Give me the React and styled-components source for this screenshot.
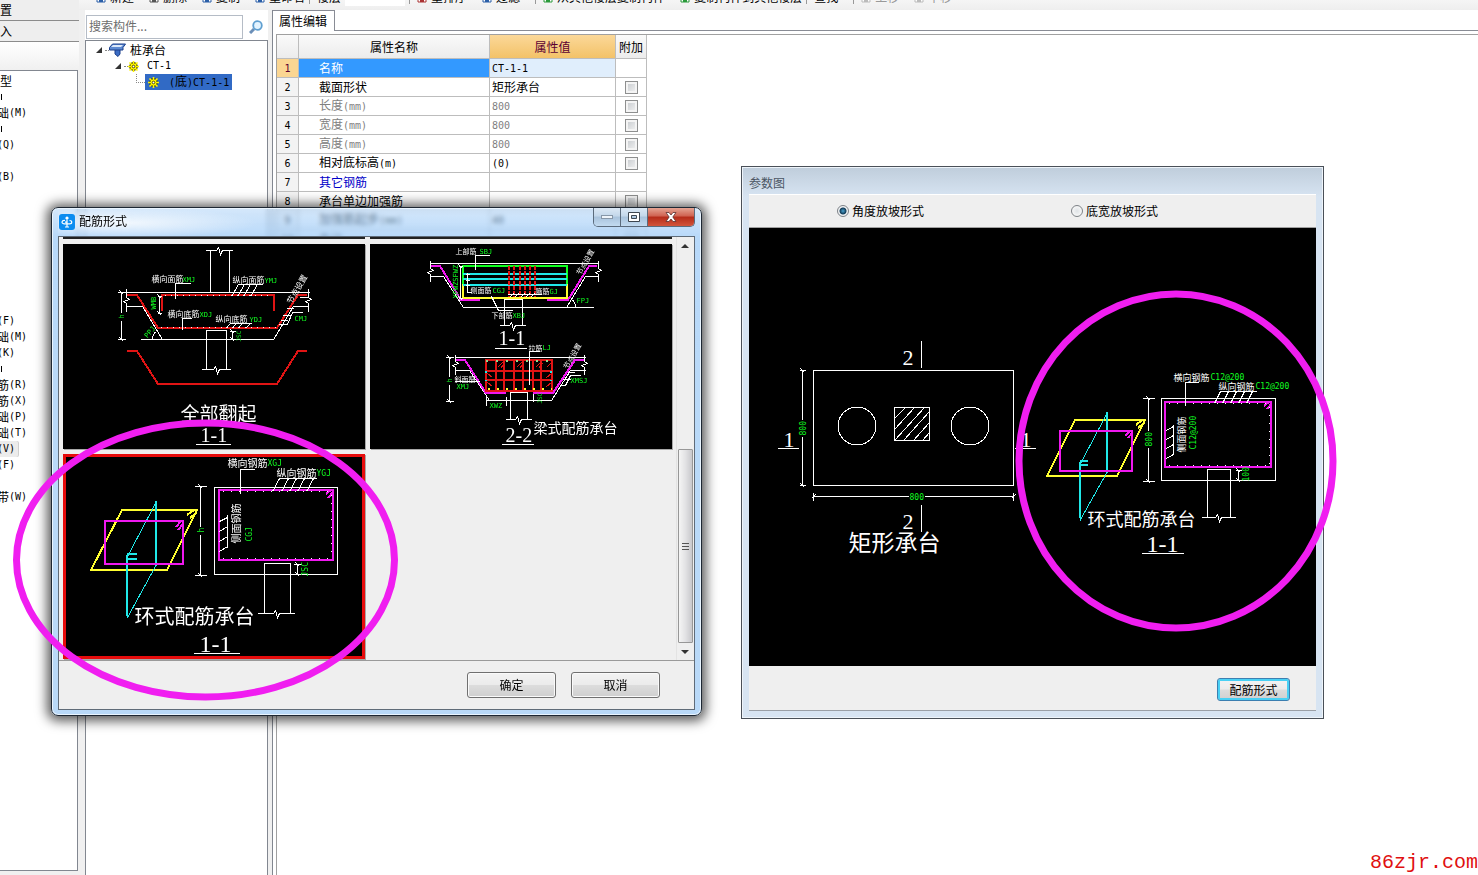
import React, { useState } from 'react';
import styled, { createGlobalStyle, css } from 'styled-components';

const sans = '"Noto Sans CJK SC", "Liberation Sans", sans-serif';
const mono = '"DejaVu Sans Mono", "Noto Sans CJK SC", monospace';

const GlobalStyle = createGlobalStyle`
  * { box-sizing: border-box; }
  body {
    margin: 0;
    background: #fff;
    color: #000;
    font-family: ${sans};
    font-size: 12px;
    line-height: 16px;
  }
  button, input { font: inherit; color: inherit; }
`;

/* ---------- main frame ---------- */

const Page = styled.div`
  position: relative;
  display: flex;
  min-height: 100vh;
  overflow: hidden;
`;

const Dock = styled.aside`
  display: flex;
  flex-direction: column;
  width: 79px;
  background: #f0f0f0;
`;

const DockTab = styled.button`
  height: 21px;
  padding: 0;
  border: 0;
  border-bottom: 1px solid #8c8c8c;
  background: #eee;
  text-align: left;
  line-height: 20px;
`;

const DockHead = styled.div`
  height: 28px;
  background: linear-gradient(#fff, #f0f0f0);
`;

const DockList = styled.ul`
  flex: 1;
  margin: 0 1px 4px 0;
  padding: 2px 0 0;
  border: 1px solid #828790;
  border-left: 0;
  background: #fff;
  list-style: none;
`;

const DockItem = styled.li`
  display: flex;
  align-items: center;
  width: ${(p) => (p.$on ? '21px' : 'auto')};
  height: 16px;
  margin-left: ${(p) => (p.$shortcut ? '-3px' : '0')};
  ${(p) => p.$on && css`
    border-radius: 2px;
    background: #ececec;
    box-shadow: 1px 0 0 #d0d0d0;
  `}
`;

const Sliver = styled.i`
  width: 2px;
  height: 6px;
  border-right: 1px solid #000;
`;

const Latin = styled.span`
  font-family: ${mono};
  font-size: 10px;
`;

const Work = styled.main`
  display: flex;
  flex: 1;
  flex-direction: column;
  min-width: 0;
`;

const Toolbar = styled.div`
  display: flex;
  align-items: flex-end;
  height: 10px;
  padding-left: 17px;
  overflow: hidden;
  background: linear-gradient(#f5f5f5, #eee);
  white-space: nowrap;
`;

const Tool = styled.button`
  display: flex;
  align-items: center;
  gap: 4px;
  height: 16px;
  margin: 0 ${(p) => (p.$last ? 4 : 15)}px 5px 0;
  padding: 0;
  border: 0;
  background: none;
  color: ${(p) => (p.$off ? '#999' : '#000')};

  svg { width: 10px; height: 12px; }
`;

const ToolGap = styled.span`
  width: 1px;
  height: 16px;
  margin: 0 7px 6px 0;
  background: #999;
`;

const ToolField = styled.span`
  width: 60px;
  height: 16px;
  margin: 0 4px 4px 0;
  background: #fff;
`;

const Panes = styled.div`
  display: flex;
  flex: 1;
  background: #f0f0f0;
`;

const TreePane = styled.section`
  display: flex;
  flex-direction: column;
  width: 183px;
  margin-left: 6px;
`;

const SearchRow = styled.div`
  display: flex;
  align-items: center;
  height: 30px;
  padding: 4px 5px 0 1px;
  background: #fff;

  svg { width: 14px; height: 14px; margin-left: 6px; }
`;

const SearchBox = styled.input`
  flex: 1;
  min-width: 0;
  height: 24px;
  padding: 0 2px 3px;
  border: 1px solid #b5bcc6;
  background: #fff;

  &::placeholder { color: #6d6d6d; opacity: 1; }
`;

const Tree = styled.div`
  flex: 1;
  padding-top: 1px;
  border: 1px solid #828790;
  border-bottom: 0;
  background: #fff;
`;

const Node = styled.div`
  display: flex;
  align-items: center;
  height: 16px;
  padding-left: ${(p) => p.$indent}px;
  white-space: pre;
`;

const Arrow = styled.i`
  width: 0;
  height: 0;
  margin-right: 3px;
  border-bottom: 6px solid #333;
  border-left: 6px solid transparent;
`;

const Dots = styled.i`
  width: 4px;
  border-top: 1px dotted #888;
`;

const Branch = styled.i`
  width: 9px;
  height: 9px;
  margin-bottom: 8px;
  border-bottom: 1px dotted #888;
  border-left: 1px dotted #888;
`;

const NodeLabel = styled.span`
  display: flex;
  align-items: center;
  gap: ${(p) => p.$gap}px;
  height: 16px;
  padding: ${(p) => (p.$on ? '0 3px' : '0')};
  background: ${(p) => (p.$on ? '#316ac5' : 'none')};

  svg { display: block; }
`;

const EditPane = styled.section`
  display: flex;
  flex: 1;
  flex-direction: column;
  margin-left: 4px;
  border-left: 1px solid #828790;
  background: #fff;
`;

const TabBar = styled.div`
  display: flex;

  &::after {
    content: '';
    flex: 1;
    border-bottom: 1px solid #898c95;
  }
`;

const Tab = styled.button`
  height: 21px;
  padding: 0 7px 0 6px;
  border: 1px solid #898c95;
  border-width: 1px 1px 0 0;
  background: #fff;
  line-height: 18px;
`;

const Sheet = styled.div`
  flex: 1;
  margin: 3px 0 0 3px;
  border: 1px solid #a0a0a0;
  border-width: 1px 0 0 1px;
`;

const Grid = styled.table`
  width: 370px;
  border-collapse: separate;
  border-spacing: 0;
  table-layout: fixed;

  th, td {
    height: 19px;
    padding: 0;
    border-right: 1px solid #bdbdbd;
    border-bottom: 1px solid #bdbdbd;
    font-weight: normal;
    white-space: nowrap;
  }
  thead th {
    height: 24px;
    background: linear-gradient(#fafafa, #ececec);
  }
  thead th:nth-child(3) {
    background: linear-gradient(#fbd899, #f3c268);
    color: #5b0032;
  }
`;

const RowNo = styled.th`
  background: ${(p) => (p.$on ? '#fbd692' : '#f3f3f3')};
  color: ${(p) => (p.$on ? '#5b0032' : '#000')};
`;

const NameCell = styled.td`
  && { padding-left: 20px; }
  background: ${(p) => (p.$on ? '#3399ff' : '#fff')};
  color: ${(p) => p.$color};
`;

const ValueCell = styled.td`
  && { padding-left: 2px; }
  background: ${(p) => (p.$on ? '#e0eefc' : '#fff')};
  color: ${(p) => p.$color};
`;

const CheckCell = styled.td`
  text-align: center;
`;

const Check = styled.input`
  appearance: none;
  display: block;
  width: 13px;
  height: 13px;
  margin: 0 auto;
  border: 1px solid #8e8f8f;
  background: linear-gradient(135deg, #c4c8cc, #f4f4f4);
  box-shadow: inset 0 0 0 2px #f4f4f4;
`;

/* ---------- windows ---------- */

const ShapeWindow = styled.section`
  position: absolute;
  top: 207px;
  left: 51px;
  width: 651px;
  padding: 0 6px 5px;
  border: 1px solid #1d2733;
  border-radius: 7px;
  background: linear-gradient(rgba(170, 208, 246, 0.5), rgba(160, 204, 248, 0.75) 30px, #b9d9f8 150px);
  box-shadow: inset 0 0 0 1px #eaf5ff, 0 1px 12px 4px rgba(0, 0, 0, 0.65);
  backdrop-filter: blur(2px);
`;

const ShapeTitle = styled.header`
  display: flex;
  align-items: flex-start;
  height: 28px;
  background: radial-gradient(closest-side, rgba(255, 255, 255, 0.75), rgba(255, 255, 255, 0)) -60px 0 / 260px 30px no-repeat;
  text-shadow: 0 0 6px #fff;

  > svg { margin: 6px 4px 0 1px; }
  h2 {
    flex: 1;
    margin: 5px 0 0;
    font-size: 12px;
    font-weight: normal;
    line-height: 16px;
  }
`;

const Caption = styled.div`
  display: flex;
  border: 1px solid #5b6b7c;
  border-top: 0;
  border-radius: 0 0 5px 5px;
  overflow: hidden;
`;

const CaptionButton = styled.button`
  display: flex;
  align-items: center;
  justify-content: center;
  width: ${(p) => (p.$close ? 46 : 27)}px;
  height: 18px;
  padding: 0;
  border: 0;
  border-right: ${(p) => (p.$close ? '0' : '1px solid #5b6b7c')};
  background: ${(p) => (p.$close
    ? 'linear-gradient(#e5a493, #cf6150 45%, #b52b19 50%, #d2553c)'
    : 'linear-gradient(#dbe8f5, #c3d7ea 45%, #a9c3dc 50%, #c2daf0)')};
`;

const ShapeBody = styled.div`
  border: 1px solid #5f6b78;
  background: #efefef;
`;

const Scroller = styled.div`
  display: flex;
  justify-content: space-between;
  padding-left: 4px;
  border-bottom: 1px solid #9a9a9a;
`;

const Thumbs = styled.div`
  display: grid;
  grid-template-columns: 302px 302px;
  gap: 5px;
  padding-bottom: 1px;
`;

const Cut = styled.i`
  height: 2px;
  background: #222;
`;

const Thumb = styled.button`
  display: block;
  height: 205px;
  padding: 0;
  border: 0;
  outline: ${(p) => (p.$on ? '3px solid #e60c0c' : 'none')};
  outline-offset: -3px;
  background: #000;
  box-shadow: 1px 1px 0 #a8a8a8;

  svg { display: block; }
`;

const ScrollBar = styled.div`
  display: flex;
  flex-direction: column;
  align-items: center;
  justify-content: space-between;
  width: 17px;
  margin-right: 1px;
  border-left: 1px solid #e3e3e3;
  padding: 7px 0 6px;
`;

const ScrollArrow = styled.i`
  width: 0;
  height: 0;
  border: 4px solid transparent;
  border-top-width: ${(p) => (p.$up ? 0 : 4)}px;
  border-bottom-width: ${(p) => (p.$up ? 4 : 0)}px;
  border-${(p) => (p.$up ? 'bottom' : 'top')}-color: #333;
`;

const ScrollThumb = styled.div`
  display: flex;
  flex-direction: column;
  align-items: center;
  justify-content: center;
  gap: 2px;
  width: 15px;
  height: 194px;
  margin-top: auto;
  margin-bottom: 7px;
  border: 1px solid #979797;
  border-radius: 1px;
  background: linear-gradient(90deg, #f5f5f5, #e2e2e4 50%, #c8c8cc);

  i { width: 7px; height: 1px; background: #555; }
`;

const ShapeFoot = styled.footer`
  display: flex;
  justify-content: flex-end;
  gap: 15px;
  padding: 11px 34px 11px 0;
`;

const Push = styled.button`
  width: 89px;
  height: 26px;
  padding: 0;
  border: 1px solid #707070;
  border-radius: 3px;
  background: linear-gradient(#f3f3f3, #ebebeb 48%, #dcdcdc 52%, #cfcfcf);
  box-shadow: inset 0 0 0 1px #fafafa;
`;

const HotPush = styled(Push)`
  width: 73px;
  height: 23px;
  border-color: #3c7fb1;
  box-shadow: inset 0 0 0 2px #48d0f4;
`;

const ParamWindow = styled.section`
  position: absolute;
  top: 166px;
  left: 741px;
  width: 583px;
  padding: 0 7px 7px;
  border: 1px solid #4a5058;
  background: linear-gradient(#bfcddb, #d7e4f2 30px);
  box-shadow: inset 0 0 0 1px #eef4fa;
`;

const ParamTitle = styled.header`
  height: 27px;
  padding-top: 8px;
  color: #4b5563;

  h2 { margin: 0; font-size: 12px; font-weight: normal; line-height: 16px; }
`;

const ParamBody = styled.div`
  border-bottom: 1px solid #9a9fa6;
  background: #efefef;

  svg { display: block; background: #000; }
`;

const Choices = styled.div`
  display: flex;
  gap: 147px;
  height: 34px;
  padding-left: 88px;
  border-top: 1px solid #fff;
  border-bottom: 1px solid #a0a0a0;
`;

const Choice = styled.label`
  display: flex;
  align-items: center;
  gap: 3px;
`;

const Radio = styled.input`
  appearance: none;
  width: 12px;
  height: 12px;
  margin: 0;
  border: 1px solid #7d8287;
  border-radius: 50%;
  background: radial-gradient(#dfe3e6, #fff);
  box-shadow: inset 0 0 0 1px #f4f4f4;

  &:checked {
    background: radial-gradient(circle, #4aa3d0 0, #123c58 3px, #e9eef2 4px);
  }
`;

const ParamFoot = styled.footer`
  display: flex;
  justify-content: flex-end;
  padding: 12px 26px 9px 0;
`;

const Marks = styled.svg`
  position: absolute;
  top: 0;
  left: 0;
  pointer-events: none;
`;

const SiteTag = styled.p`
  position: absolute;
  right: 0;
  bottom: 0;
  margin: 0;
  color: #e01010;
  font: 20px/24px "Liberation Mono", monospace;
`;

/* ---------- icons ---------- */

const LensIcon = () => (
  <svg viewBox="0 0 14 14" fill="none">
    <path d="M1 13l4-4" stroke="#6b8fb8" strokeWidth="3" />
    <circle cx="8.5" cy="5.5" r="4.3" fill="#e4f4ff" stroke="#5f9fd0" strokeWidth="1.8" />
  </svg>
);

const CapIcon = () => (
  <svg width="17" height="14" viewBox="0 0 17 14">
    <path d="M6 6h5v5l-2 2.500-3-2.500z" fill="#3b6cc4" stroke="#1b3f8b" />
    <path d="M.5 4.500l3-3.500h13l-2.500 3.500v2.500H.5z" fill="#5d8ad2" stroke="#1b3f8b" />
    <path d="M2 4l2-2h10l-2 2z" fill="#dbe8fa" />
  </svg>
);

const GearIcon = () => (
  <svg width="11" height="11" viewBox="0 0 11 11">
    <circle cx="5.5" cy="5.5" r="4.4" fill="#3c3c00" />
    <path d="M5.500 0v11M0 5.500h11M1.500 1.500l8 8M9.500 1.500l-8 8" stroke="#fff600" strokeWidth="1.600" />
    <circle cx="5.5" cy="5.5" r="2.9" fill="#fff600" />
    <circle cx="5.5" cy="5.5" r="1.3" fill="#fff" stroke="#3c3c00" strokeWidth=".9" />
  </svg>
);

const AppIcon = () => (
  <svg width="16" height="16" viewBox="0 0 16 16">
    <rect width="16" height="16" rx="3" fill="#0b8cf0" />
    <path
      d="M8 3v10M6.500 4.500L8 3l1.500 1.500M6 13h4M6 6.500C2.500 6 2 9.800 5 9.800h3M10.500 6.500c3 0 3 3.300 0 3.300H8M6 8.200h2"
      fill="none"
      stroke="#fff"
      strokeWidth="1.2"
    />
  </svg>
);

const ToolIcon = ({ color }) => (
  <svg viewBox="0 0 10 12">
    <path d="M1 1h6l2 2v8H1z" fill="#fff" stroke={color} />
    <path d="M3 8h4v3H3z" fill={color} />
  </svg>
);

/* ---------- drafting helpers ---------- */

const W = '#fff';
const R = '#e01414';
const G = '#10ff20';
const M = '#f018f0';
const Y = '#ffff30';
const C = '#20e8e8';

// thick strokes sit on the pixel edge, thin ones on the pixel centre
const Line = ({ d, c = W, w = 1, dash }) => (
  <path
    d={d}
    fill="none"
    stroke={c}
    strokeWidth={w}
    strokeDasharray={dash}
    transform={w === 2 ? 'translate(-.5 -.5)' : undefined}
  />
);

const Note = ({ x, y, s = 8, c = W, turn, children, family = sans }) => (
  <text
    x={x}
    y={y}
    fill={c}
    fontSize={s}
    fontFamily={family}
    transform={turn ? `rotate(${turn} ${x} ${y})` : undefined}
  >
    {children}
  </text>
);

const Code = (props) => <Note c={G} family={mono} {...props} />;

const Section = ({ x, y, s = 22, line, children }) => (
  <>
    <Note x={x} y={y} s={s} family={'"Liberation Serif", serif'}>{children}</Note>
    {line && <Line d={line} />}
  </>
);

// horizontal cut line with a kink in the middle
const Break = ({ x1, x2, y }) => {
  const m = Math.round((x1 + x2) / 2);
  return <Line d={`M${x1} ${y}H${m - 3}l2 -3l2 7l2 -4H${x2}`} />;
};

const SideBreak = ({ x, y1, y2 }) => {
  const m = Math.round((y1 + y2) / 2);
  return <Line d={`M${x} ${y1}V${m - 3}l3 2l-6 2l3 2V${y2}`} />;
};

const Dim = ({ x, y1, y2, r = 4 }) => (
  <Line d={`M${x} ${y1}V${y2}M${x - r} ${y1}h${2 * r}M${x - r} ${y2}h${2 * r}M${x - 2} ${y1 - 2}l4 4M${x - 2} ${y2 - 2}l4 4`} />
);

const Gap = ({ x, y, w, h }) => <rect x={x} y={y} width={w} height={h} fill="#000" />;

const Sketch = ({ box, children, label }) => {
  const [, , w, h] = box;
  return (
    <svg width={w} height={h} viewBox={box.join(' ')} role="img" aria-label={label} shapeRendering="crispEdges">
      <g transform="translate(.5 .5)">{children}</g>
    </svg>
  );
};

const FoldUp = () => (
  <Sketch box={[63, 244, 302, 205]} label="全部翻起">
    <Break x1={205} x2={232} y={250} />
    <Line d="M210 250V292M229 250V292M126 292H309" />
    <SideBreak x={126} y1={288} y2={311} />
    <SideBreak x={308} y1={288} y2={311} />
    <Line d="M126 306H142L162 339M140 339H273L293 306H308" />
    <Dim x={121} y1={292} y2={339} />
    <Gap x={118} y={312} w={6} h={8} />
    <Line d="M127 295H137L158 328H277L298 295H307" c={R} w={2} />
    <Line d="M162 311V295H274V311" c={R} w={2} />
    <Line d="M164 295H272" dash="1 5" />
    <Line d="M160 327H275" dash="1 5" />
    <Dim x={159} y1={296} y2={313} r={2} />
    <Line d="M175 298V283H190" />
    <Line d="M238 284H262M238 284L231 296M244 284L237 296M250 284L243 296M257 284L250 296" />
    <Line d="M182 329V318H191" />
    <Line d="M230 323H251M230 323l-5 5M236 323l-5 5M242 323l-5 5M250 323l-5 5" />
    <Line d="M206 369V330H226V369" />
    <Break x1={201} x2={230} y={369} />
    <Dim x={232} y1={331} y2={339} r={3} />
    <Line d="M152 339Q152 333 156 331" />
    <Line d="M302 312H292L287 324H278M290 315H282M293 308H286M287 320H280M299 297H307" />
    <Line d="M127 351H137L158 384H277L298 351H307" c={R} w={2} />
    <Note x={151} y={281}>横向面筋</Note>
    <Code x={182} y={281} s={7}>XMJ</Code>
    <Note x={232} y={282}>纵向面筋</Note>
    <Code x={264} y={282} s={7}>YMJ</Code>
    <Note x={167} y={316}>横向底筋</Note>
    <Code x={199} y={316} s={7}>XDJ</Code>
    <Note x={215} y={321}>纵向底筋</Note>
    <Code x={249} y={321} s={7}>YDJ</Code>
    <Code x={294} y={320} s={7}>CMJ</Code>
    <Code x={147} y={338} s={7} turn={-50}>PPJ</Code>
    <Code x={155} y={309} s={7} turn={-90}>WMB</Code>
    <Code x={240} y={341} s={6} turn={-90}>JSC</Code>
    <Code x={123} y={318} s={7} turn={-90}>h</Code>
    <Note x={291} y={304} turn={-60}>节点设置</Note>
    <Note x={180} y={420} s={19}>全部翻起</Note>
    <Section x={200} y={441} s={20} line="M195 444H230">1-1</Section>
  </Sketch>
);

const BeamType = () => (
  <Sketch box={[370, 244, 302, 205]} label="梁式配筋承台">
    <Line d="M430 263H598M430 276H443L463 307H593M566 307L585 276H598" />
    <SideBreak x={430} y1={260} y2={281} />
    <SideBreak x={598} y1={260} y2={281} />
    <Line d="M431 266H440L461 300H480M547 300H568L589 266H597" c={M} w={2} />
    <Line d="M463 284V298H567V284" c={Y} w={2} />
    <Line d="M463 284V266H567V284" c={G} w={2} />
    <Line d="M463 274H567M463 279H567M463 285H567" c={C} w={2} />
    <Line d="M509 266V297M514 266V297M520 266V297M525 266V297M530 266V297M535 266V297" c={R} w={2} dash="4 1" />
    <Dim x={460} y1={266} y2={298} r={2} />
    <Line d="M475 269V255H489M467 272V292H471M465 274h4M465 280h4M465 285h4" />
    <Line d="M507 294H541M509 297l4 -4M514 297l4 -4M520 297l4 -4M525 297l4 -4M530 297l4 -4" />
    <Line d="M491 296L498 310H512M504 325V299H522V325M575 307Q575 301 571 299" />
    <Break x1={499} x2={525} y={325} />
    <Note x={455} y={253} s={7}>上部筋</Note>
    <Code x={479} y={253} s={7}>SBJ</Code>
    <Note x={470} y={292} s={7}>侧面筋</Note>
    <Code x={492} y={292} s={7}>CGJ</Code>
    <Note x={535} y={293} s={7}>箍筋</Note>
    <Code x={549} y={293} s={7}>GJ</Code>
    <Note x={491} y={317} s={7}>下部筋</Note>
    <Code x={512} y={317} s={7}>XBJ</Code>
    <Code x={576} y={302} s={7}>FPJ</Code>
    <Code x={457} y={298} s={7} turn={-90}>XFWZSFWZ</Code>
    <Note x={580} y={275} s={7} turn={-60}>节点设置</Note>
    <Section x={498} y={344} s={20} line="M494 348H526">1-1</Section>

    <Line d="M455 357H585M455 370H469L489 400H551L570 370H585" />
    <SideBreak x={455} y1={354} y2={374} />
    <SideBreak x={584} y1={354} y2={374} />
    <Line d="M456 360H465L486 393H506M533 393H553L575 360H584" c={M} w={2} />
    <Line d="M486 360H552V391H486ZM486 371H552M486 380H552M496 360V391M504 360V391M514 360V391M523 360V391M533 360V391M541 360V391" c={R} w={2} />
    <Line d="M497 367l5 -5M500 368l4 -5M516 367l5 -5M519 368l4 -5M535 367l5 -5M538 368l4 -5M546 367l5 -5M487 373l5 4M487 382l5 4M551 373l-5 4M551 382l-5 4" c={R} />
    <Line d="M488 389H552" c={Y} w={2} dash="2 7" />
    <Line d="M486 361H552" c="#8fd88f" w={2} dash="2 8" />
    <Line d="M486 371V381M551 371V381" c={C} w={2} dash="2 7" />
    <Dim x={449} y1={357} y2={401} />
    <Gap x={446} y={376} w={6} h={8} />
    <Line d="M529 384V351H539M486 396V405M506 396V405M486 400H506M533 393V401" />
    <Line d="M454 381H479M580 375H570L565 385H560M574 372H567M570 379H562" />
    <Line d="M510 419V392H527V419" />
    <Break x1={505} x2={531} y={419} />
    <Note x={528} y={350} s={7}>拉筋</Note>
    <Code x={542} y={349} s={7}>LJ</Code>
    <Note x={454} y={381} s={7}>斜面筋</Note>
    <Code x={456} y={388} s={7}>XMJ</Code>
    <Code x={451} y={382} s={7} turn={-90}>h</Code>
    <Code x={489} y={407} s={7}>XWZ</Code>
    <Code x={541} y={403} s={6} turn={-90}>JSC</Code>
    <Code x={570} y={382} s={7}>XMSJ</Code>
    <Note x={567} y={369} s={7} turn={-60}>节点设置</Note>
    <Section x={505} y={441} s={20} line="M501 444H533">2-2</Section>
    <Note x={533} y={432} s={14}>梁式配筋承台</Note>
  </Sketch>
);

const RingType = () => (
  <Sketch box={[63, 454, 302, 205]} label="环式配筋承台">
    <Line d="M122 510H197L167 570H91Z" c={Y} w={2} />
    <Line d="M187 515l7 -5M190 518l7 -6" c={Y} w={2} />
    <Line d="M156 501V564L127 617V556Z" c={C} />
    <Line d="M156 501V563M127 555V616M127 554H137M127 559H137" c={C} w={2} />
    <Line d="M105 521H183V564H105Z" c={M} w={2} />
    <Line d="M176 527l5 -6M178 530l5 -6" c={M} w={2} />
    <Dim x={200} y1={486} y2={575} r={6} />
    <Gap x={197} y={526} w={7} h={8} />
    <Line d="M214 487H337V574H214Z" />
    <Line d="M219 490H333V560H219Z" c={M} w={2} />
    <Line d="M326 494l5 -4M328 498l5 -6" c={M} w={2} />
    <Line d="M222 491H331M222 558H331M331 494V556" dash="1 7" />
    <Line d="M240 493V469H254" />
    <Line d="M279 478H316M279 478l-7 13M288 478l-7 13M296 478l-7 13M304 478l-7 13M313 478l-7 13" />
    <Line d="M227 514V547M219 521l8 -4M219 531l8 -5M219 541l8 -5M219 551l8 -5" />
    <Line d="M264 613V563H290V613" />
    <Break x1={257} x2={294} y={613} />
    <Dim x={297} y1={564} y2={574} />
    <Note x={227} y={466} s={10}>横向钢筋</Note>
    <Code x={267} y={465} s={8}>XGJ</Code>
    <Note x={276} y={476} s={10}>纵向钢筋</Note>
    <Code x={316} y={475} s={8}>YGJ</Code>
    <Note x={239} y={543} s={10} turn={-90}>侧面钢筋</Note>
    <Code x={251} y={541} s={8} turn={-90}>CGJ</Code>
    <Code x={203} y={532} s={8} turn={-90}>h</Code>
    <Code x={307} y={576} s={8} turn={-90}>JSC</Code>
    <Note x={134} y={623} s={20}>环式配筋承台</Note>
    <Section x={199} y={651} s={24} line="M193 653H239">1-1</Section>
  </Sketch>
);

const ParamDrawing = () => (
  <Sketch box={[749, 228, 567, 438]} label="参数图">
    <Line d="M813 370H1013V485H813Z" />
    <Dim x={802} y1={370} y2={485} r={3} />
    <Line d="M813 496H1013M813 492v8M1013 492v8M811 498l4 -4M1011 498l4 -4" />
    <circle cx="856.5" cy="425.5" r="19" fill="none" stroke={W} />
    <circle cx="969.5" cy="425.5" r="19" fill="none" stroke={W} />
    <Line d="M894 407H929V440H894ZM894 418l11 -11M894 429l20 -22M894 440l30 -33M903 440l26 -29M913 440l16 -18M922 440l7 -8" />
    <Line d="M921 340V367M921 504V531" />
    <Gap x={798} y={419} w={9} h={17} />
    <Gap x={908} y={492} w={16} h={9} />
    <Code x={805} y={435} s={8} turn={-90}>800</Code>
    <Code x={909} y={499} s={8}>800</Code>
    <Section x={902} y={364}>2</Section>
    <Section x={902} y={528}>2</Section>
    <Section x={783} y={446} line="M777 448H798">1</Section>
    <Section x={1020} y={446} line="M1014 448H1035">1</Section>
    <Note x={848} y={550} s={23}>矩形承台</Note>

    <Line d="M1075 420H1145L1117 476H1047Z" c={Y} w={2} />
    <Line d="M1136 425l6 -5M1138 428l7 -6" c={Y} w={2} />
    <Line d="M1107 412V471L1080 519V463Z" c={C} />
    <Line d="M1107 412V471M1080 462V518M1080 461H1088M1080 465H1088" c={C} w={2} />
    <Line d="M1060 431H1132V471H1060Z" c={M} w={2} />
    <Line d="M1125 436l5 -5M1128 438l4 -5" c={M} w={2} />
    <Dim x={1148} y1={398} y2={481} r={6} />
    <Gap x={1144} y={430} w={9} h={17} />
    <Line d="M1161 398H1275V480H1161Z" />
    <Line d="M1165 402H1271V467H1165Z" c={M} w={2} />
    <Line d="M1264 406l5 -4M1267 409l4 -5" c={M} w={2} />
    <Line d="M1168 403H1269M1168 465H1269M1269 406V464" dash="1 7" />
    <Line d="M1185 405V382H1198" />
    <Line d="M1220 391H1256M1220 391l-6 12M1228 391l-6 12M1236 391l-6 12M1244 391l-6 12M1252 391l-6 12" />
    <Line d="M1173 424V454M1166 430l7 -4M1166 439l7 -4M1166 448l7 -4M1166 458l7 -4" />
    <Line d="M1207 517V469H1230V517" />
    <Break x1={1201} x2={1235} y={517} />
    <Dim x={1238} y1={470} y2={480} r={3} />
    <Note x={1173} y={380} s={9}>横向钢筋</Note>
    <Code x={1210} y={379} s={8}>C12@200</Code>
    <Note x={1218} y={389} s={9}>纵向钢筋</Note>
    <Code x={1255} y={388} s={8}>C12@200</Code>
    <Note x={1184} y={452} s={9} turn={-90}>侧面钢筋</Note>
    <Code x={1195} y={449} s={8} turn={-90}>C12@200</Code>
    <Code x={1151} y={446} s={8} turn={-90}>800</Code>
    <Code x={1248} y={481} s={8} turn={-90}>100</Code>
    <Note x={1087} y={525} s={18}>环式配筋承台</Note>
    <Section x={1146} y={551} s={24} line="M1141 553H1183">1-1</Section>
  </Sketch>
);

/* ---------- data ---------- */

const dockItems = [
  '型', '|', '础(M)', '|', '(Q)', '', '(B)', '', '', '', '', '', '', '', '',
  '(F)', '础(M)', '(K)', '|', '筋(R)', '筋(X)', '础(P)', '础(T)', '(V)', '(F)', '', '带(W)',
];

const rows = [
  { name: '名称', value: 'CT-1-1', on: true, noCheck: true },
  { name: '截面形状', value: '矩形承台' },
  { name: '长度(mm)', value: '800', color: '#808080' },
  { name: '宽度(mm)', value: '800', color: '#808080' },
  { name: '高度(mm)', value: '800', color: '#808080' },
  { name: '相对底标高(m)', value: '(0)' },
  { name: '其它钢筋', value: '', color: '#0000c8', noCheck: true },
  { name: '承台单边加强筋', value: '' },
  { name: '加强筋起步(mm)', value: '40' },
  { name: '备注', value: '' },
];

// half-width runs sit one size smaller beside the Chinese text
const Mixed = ({ children }) =>
  children.split(/([\x21-\x7e]+)/).map((part, i) => (i % 2 ? <Latin key={i}>{part}</Latin> : part));

const App = () => {
  const [slope, setSlope] = useState('angle');

  return (
    <>
      <GlobalStyle />
      <Page>
        <Dock>
          <DockTab>置</DockTab>
          <DockTab>入</DockTab>
          <DockHead />
          <DockList>
            {dockItems.map((text, i) => (
              <DockItem key={i} $on={text === '(V)'} $shortcut={text.includes('(')}>
                {text === '|' ? <Sliver /> : <Mixed>{text}</Mixed>}
              </DockItem>
            ))}
          </DockList>
        </Dock>

        <Work>
          <Toolbar>
            <Tool><ToolIcon color="#2b5fa8" />新建</Tool>
            <Tool><ToolIcon color="#555" />删除</Tool>
            <Tool><ToolIcon color="#2b5fa8" />复制</Tool>
            <Tool $last><ToolIcon color="#2b5fa8" />重命名</Tool>
            <ToolGap />
            <Tool $last>楼层</Tool>
            <ToolField />
            <ToolGap />
            <Tool><ToolIcon color="#a33" />重排序</Tool>
            <Tool><ToolIcon color="#2b5fa8" />过滤</Tool>
            <ToolGap />
            <Tool><ToolIcon color="#2a9a3a" />从其他楼层复制构件</Tool>
            <Tool $last><ToolIcon color="#2a9a3a" />复制构件到其他楼层</Tool>
            <ToolGap />
            <Tool>查找</Tool>
            <ToolGap />
            <Tool $off><ToolIcon color="#bbb" />上移</Tool>
            <Tool $off><ToolIcon color="#bbb" />下移</Tool>
          </Toolbar>

          <Panes>
            <TreePane>
              <SearchRow>
                <SearchBox type="search" placeholder="搜索构件..." aria-label="搜索构件" />
                <LensIcon />
              </SearchRow>
              <Tree>
                <Node $indent={10}>
                  <Arrow />
                  <Dots />
                  <NodeLabel $gap={4}><CapIcon />桩承台</NodeLabel>
                </Node>
                <Node $indent={29}>
                  <Arrow />
                  <Dots />
                  <NodeLabel $gap={8}><GearIcon /><Latin>CT-1</Latin></NodeLabel>
                </Node>
                <Node $indent={50}>
                  <Branch />
                  <NodeLabel $on $gap={10}>
                    <GearIcon />
                    <span><Mixed>(底)CT-1-1</Mixed></span>
                  </NodeLabel>
                </Node>
              </Tree>
            </TreePane>

            <EditPane>
              <TabBar>
                <Tab>属性编辑</Tab>
              </TabBar>
              <Sheet>
                <Grid>
                  <colgroup>
                    <col width="22" />
                    <col width="191" />
                    <col width="126" />
                    <col width="31" />
                  </colgroup>
                  <thead>
                    <tr>
                      <th aria-label="序号" />
                      <th>属性名称</th>
                      <th>属性值</th>
                      <th>附加</th>
                    </tr>
                  </thead>
                  <tbody>
                    {rows.map((row, i) => (
                      <tr key={row.name}>
                        <RowNo $on={row.on}><Latin>{i + 1}</Latin></RowNo>
                        <NameCell $on={row.on} $color={row.on ? '#fff' : row.color}>
                          <Mixed>{row.name}</Mixed>
                        </NameCell>
                        <ValueCell $on={row.on} $color={row.color}>
                          <Mixed>{row.value}</Mixed>
                        </ValueCell>
                        <CheckCell>
                          {!row.noCheck && <Check type="checkbox" aria-label={row.name} />}
                        </CheckCell>
                      </tr>
                    ))}
                  </tbody>
                </Grid>
              </Sheet>
            </EditPane>
          </Panes>
        </Work>

        <ParamWindow>
          <ParamTitle><h2>参数图</h2></ParamTitle>
          <ParamBody>
            <Choices>
              <Choice>
                <Radio type="radio" name="slope" checked={slope === 'angle'} onChange={() => setSlope('angle')} />
                角度放坡形式
              </Choice>
              <Choice>
                <Radio type="radio" name="slope" checked={slope === 'width'} onChange={() => setSlope('width')} />
                底宽放坡形式
              </Choice>
            </Choices>
            <ParamDrawing />
            <ParamFoot>
              <HotPush>配筋形式</HotPush>
            </ParamFoot>
          </ParamBody>
        </ParamWindow>

        <ShapeWindow>
          <ShapeTitle>
            <AppIcon />
            <h2>配筋形式</h2>
            <Caption>
              <CaptionButton aria-label="最小化">
                <svg width="12" height="4"><rect x=".5" y=".5" width="11" height="3" fill="#eef4fa" stroke="#8797a8" /></svg>
              </CaptionButton>
              <CaptionButton aria-label="最大化">
                <svg width="12" height="10">
                  <path d="M.5.5h11v9H.5zM3.500 3.500h5v3h-5z" fill="#fff" fillRule="evenodd" stroke="#3d4650" />
                </svg>
              </CaptionButton>
              <CaptionButton $close aria-label="关闭">
                <svg width="12" height="10">
                  <path d="M1 .5h3l2 2.500L8 .5h3L7.800 5 11 9.500H8L6 7 4 9.500H1L4.200 5z" fill="#fff" stroke="#5a3030" strokeWidth=".8" />
                </svg>
              </CaptionButton>
            </Caption>
          </ShapeTitle>
          <ShapeBody>
            <Scroller>
              <Thumbs>
                <Cut />
                <Cut />
                <Thumb><FoldUp /></Thumb>
                <Thumb><BeamType /></Thumb>
                <Thumb $on><RingType /></Thumb>
              </Thumbs>
              <ScrollBar>
                <ScrollArrow $up />
                <ScrollThumb><i /><i /><i /></ScrollThumb>
                <ScrollArrow />
              </ScrollBar>
            </Scroller>
            <ShapeFoot>
              <Push>确定</Push>
              <Push>取消</Push>
            </ShapeFoot>
          </ShapeBody>
        </ShapeWindow>

        <Marks width="1340" height="710" fill="none" stroke="#f01ef0" strokeWidth="7" aria-hidden="true">
          <ellipse cx="205.5" cy="560" rx="189" ry="137" />
          <ellipse cx="1176" cy="461" rx="157" ry="167" />
        </Marks>
        <SiteTag>86zjr.com</SiteTag>
      </Page>
    </>
  );
};

export default App;
